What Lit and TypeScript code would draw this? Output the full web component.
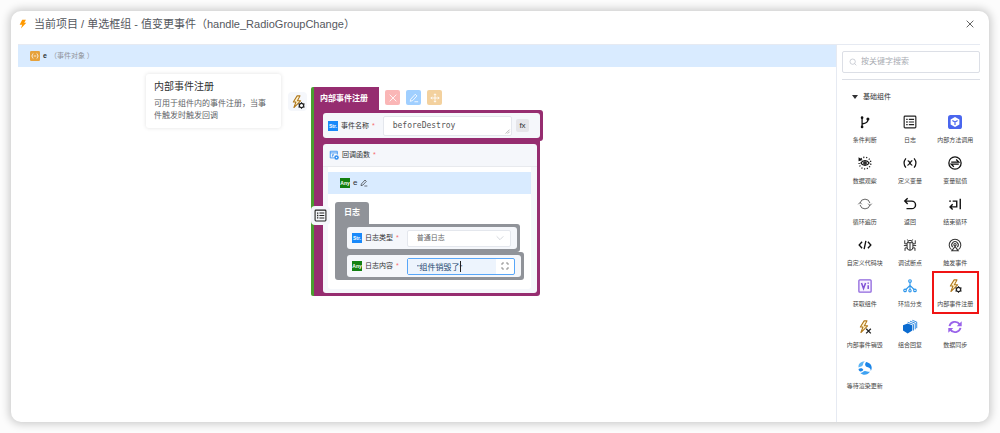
import { LitElement, html, css, svg, nothing } from "lit";
import { customElement, property } from "lit/decorators.js";
import { classMap } from "lit/directives/class-map.js";

const bolt = svg`<path d="M10.5 1.5 4 12h4.5L5 21.5 16.5 10H11l4.5-8.5z" fill="#fff3d0" stroke="#b0781c" stroke-width="1.8" stroke-linejoin="round"/>`;

const icons: Record<string, unknown> = {
  bolt: svg`<path d="M10 2h9l-4 7h5L7 23l3-9H4z" fill="#f90"/>`,
  close: svg`<path d="m4 4 16 16M20 4 4 20" stroke="currentColor" stroke-width="2" fill="none"/>`,
  search: svg`<g fill="none" stroke="currentColor" stroke-width="2"><circle cx="11" cy="11" r="8"/><path d="m17 17 5 5"/></g>`,
  pen: svg`<g fill="none" stroke="currentColor" stroke-width="2" stroke-linejoin="round"><path d="m4 15 11-12 4 4L9 18l-6 2zM13 21h9"/></g>`,
  move: svg`<g fill="none" stroke="currentColor" stroke-width="2"><path d="M12 2v20M2 12h20M9 5l3-3 3 3M9 19l3 3 3-3M5 9l-3 3 3 3M19 9l3 3-3 3"/></g>`,
  chevron: svg`<path d="m2 7 10 10L22 7" fill="none" stroke="currentColor" stroke-width="2"/>`,
  grip: svg`<path d="M3 22 22 3M13 22l9-9" fill="none" stroke="currentColor" stroke-width="2.5"/>`,
  expand: svg`<path d="M3 9V3h6M15 3h6v6M21 15v6h-6M9 21H3v-6" fill="none" stroke="currentColor" stroke-width="2.4"/>`,
  object: svg`<rect width="24" height="24" rx="3" fill="#e6a23c"/><g fill="none" stroke="#fff" stroke-width="1.8"><path d="M8 6c-3 0-1 6-4 6 3 0 1 6 4 6M16 6c3 0 1 6 4 6-3 0-1 6-4 6M9 12h6"/></g>`,
  func: svg`<g fill="none" stroke="#2f8cf0" stroke-width="2"><path d="M12 19H3V3h17v8M3 7h17M7 16c3 0 1-6 4-6M7 12h4"/></g><circle cx="18" cy="18" r="5.5" fill="#2f8cf0"/><circle cx="18" cy="18" r="1.8" fill="#fff"/>`,
  branch: svg`<g fill="none" stroke="#111" stroke-width="2.2"><path d="M7 5v15M8 15c6-1 9-2 9-7"/></g><g fill="#111"><circle cx="7" cy="4.5" r="2.3"/><circle cx="7" cy="20.5" r="2.3"/><circle cx="17" cy="7" r="2.6"/></g>`,
  log: svg`<g fill="none" stroke="#222"><rect x="2" y="2" width="20" height="20" rx="1.5" stroke-width="2"/><path d="M10 7.5h9M10 12h9M10 16.5h9" stroke-width="2"/><path d="M5.500 7.500h2.500M5.500 12h2.500M5.500 16.500h2.500" stroke-width="2.4"/></g>`,
  method: svg`<rect width="24" height="24" rx="4.500" fill="#4a66ee"/><path d="m12 3.500 7.500 4.300v8.400L12 20.500l-7.500-4.300V7.800z" fill="#fff"/><path d="m7.500 9.500 4.500 2.700 4.500-2.700M12 12v5" fill="none" stroke="#4a66ee" stroke-width="2"/>`,
  watch: svg`<g fill="none" stroke="#111"><path d="M5 5a10 10 0 1 1-3 7" stroke-width="2.4" stroke-dasharray="1.8 3"/><path d="M5 12c3-5.500 11-5.500 14 0-3 5.500-11 5.500-14 0z" stroke-width="2.200"/><circle cx="12" cy="12" r="2" stroke-width="2.400"/></g><path d="M1 2v7l7-2z" fill="#111"/>`,
  variable: svg`<g fill="none" stroke="#111" stroke-width="2.100"><path d="M5 4C1 9 1 15 5 20M19 4c4 5 4 11 0 16M8 8.500c4-1.500 4 8.500 8 7M16 8c-3 0-5 8-8.500 8"/></g>`,
  assign: svg`<g fill="none" stroke="#111" stroke-width="2.200"><circle cx="12" cy="12" r="10.500"/><path d="M5.500 10.500h13L14 6M18.500 14h-13l4.500 4.500"/></g>`,
  loop: svg`<g fill="none" stroke="#666" stroke-width="1.700"><path d="M3.500 10.500a8.700 8.700 0 0 1 17 0M20.500 13.500a8.700 8.700 0 0 1-17 0M.5 12.500l3-3 3 3M17.500 11.500l3 3 3-3"/></g>`,
  back: svg`<path d="M8 2 3 7l5 5M3 7h12a6 6 0 0 1 0 13H6" fill="none" stroke="#111" stroke-width="2.400"/>`,
  endloop: svg`<g fill="none" stroke="#111" stroke-width="2.400"><path d="M2 7h3M8 7h7v10H4M8 12.500 3.500 17 8 21.500M21 3v18"/></g>`,
  code: svg`<path d="m7 6.500-5 5.500 5 5.500M17 6.500l5 5.500-5 5.500M13.500 5l-3 14" fill="none" stroke="#111" stroke-width="2.300"/>`,
  bug: svg`<g fill="none" stroke="#333" stroke-width="1.700"><path d="M7 8h10v8a5 5 0 0 1-10 0zM8 8a4 4 0 0 1 8 0M12 8v13M7 13H1.500M17 13h5.500M7 10H3V4M17 10h4V4M7.500 17H3.500v5M16.500 17h4v5M9 5 7.500 2.500M15 5l1.500-2.500"/></g>`,
  trigger: svg`<g fill="none" stroke="#333" stroke-width="1.800"><path d="M6 20a10 10 0 1 1 12 0"/><path d="M8 15.500a5.500 5.500 0 1 1 8 0"/><circle cx="12" cy="11.500" r="2"/><path d="M12 14.500 6.500 22h11z"/></g>`,
  vi: svg`<rect x="1.500" y="1.500" width="21" height="21" rx="1.500" fill="#f6f1ff" stroke="#8f66dd" stroke-width="2.200"/><path d="m6 7 3.500 9.500L13 7M17.500 10.500V17M17.500 6v2.200" fill="none" stroke="#8253d6" stroke-width="2.600"/>`,
  tree: svg`<g fill="none" stroke="#2b95ea" stroke-width="1.900"><circle cx="12" cy="3.500" r="2.300"/><circle cx="3.500" cy="19.500" r="2.200"/><circle cx="12" cy="20" r="2"/><circle cx="20.500" cy="19.500" r="2.200"/><path d="M12 6v12M12 11l-7 7M12 11l7 7"/></g>`,
  register: svg`${bolt}<circle cx="18" cy="18" r="3.700" fill="#fff" stroke="#222" stroke-width="2.200"/><path d="M18 12.300v2M18 21.700v2M12.800 15l1.800 1M21.400 20l1.800 1M12.800 21l1.800-1M21.400 16l1.800-1" stroke="#222" stroke-width="1.800"/>`,
  destroy: svg`${bolt}<path d="m14 15 8 8M22 15l-8 8" stroke="#222" stroke-width="2.200"/>`,
  group: svg`<path d="m8 6 8 3v9l-8 5-8-5V9z" fill="#0b6bd0"/><path d="m8 4 10 3.500V18M12 2l9 3.500V16M16 .5l7.500 3V14" fill="none" stroke="#2b86e0" stroke-width="1.600"/>`,
  sync: svg`<g fill="none" stroke="#9a63ea" stroke-width="3.200"><path d="M2.500 10.500a9.700 9.700 0 0 1 17.500-3M21.500 13.500A9.700 9.700 0 0 1 4 16.500"/></g><path d="M23.500 2v8.500H15zM.5 22v-8.500H9z" fill="#9a63ea"/>`,
  render: svg`<path d="M1 11C0 5 5 .5 12 1 7.500 3 10 6.500 7 8.500c-2 1.200-4 1-6 2.500z" fill="#5bb5f5"/><path d="M14 1.500c8 1 12 9 8 15.500 0-4-2-6-5-6.500-3.500-.5-7-4.500-3-9z" fill="#1c86e8"/><path d="M20.500 18.500c-4 6-12 6.500-16.500 2 3.500 0 4-3 7.500-3.500 3-.3 6 2 9 1.500z" fill="#3fa2f2"/><path d="M1 13.500c3-2 7.500-1.500 8 1.500-1 2.500-4 3.500-6 2.500C1.500 16.500 1 15 1 13.500z" fill="#1c86e8"/>`,
};

@customElement("ui-icon")
class UiIcon extends LitElement {
  @property() name = "";
  static styles = css`
    :host { display: inline-flex; flex: none; width: 10px; height: 10px; }
    svg { display: block; width: 100%; height: 100%; overflow: visible; }
  `;
  render() {
    return html`<svg viewBox="0 0 24 24" aria-hidden="true">${icons[this.name] ?? nothing}</svg>`;
  }
}

const palette = [
  ["branch", "条件判断"], ["log", "日志"], ["method", "内部方法调用"],
  ["watch", "数据观察"], ["variable", "定义变量"], ["assign", "变量赋值"],
  ["loop", "循环遍历"], ["back", "返回"], ["endloop", "结束循环"],
  ["code", "自定义代码块"], ["bug", "调试断点"], ["trigger", "触发事件"],
  ["vi", "获取组件"], ["tree", "环境分支"], ["register", "内部事件注册"],
  ["destroy", "内部事件销毁"], ["group", "组合回复"], ["sync", "数据同步"],
  ["render", "等待渲染更新"],
];

@customElement("app-root")
class AppRoot extends LitElement {
  static styles = css`
    :host {
      display: flex; box-sizing: border-box; min-height: 100vh; padding: 11px;
      background: #fcfcfc; color: #303133;
      font: 7px/12px "Liberation Sans", "Noto Sans CJK SC", sans-serif;
    }
    * { box-sizing: border-box; }
    button, input, select, textarea { font: inherit; color: inherit; margin: 0; padding: 0; border: 0; background: none; outline: none; }
    .dialog {
      flex: 1; display: flex; flex-direction: column; background: #fff;
      border-radius: 10px; box-shadow: 0 0 8px 2px rgba(0, 0, 0, 0.2);
    }
    header { display: flex; align-items: center; gap: 6px; height: 33px; padding: 0 14px 8px 7px; }
    h1 { flex: 1; margin: 0; font-size: 11px; line-height: 16px; font-weight: 400; color: #55585e; }
    .close { display: flex; color: #444; }
    .body { flex: 1; display: flex; margin: 0 9px 0 7px; border-top: 1px solid #e6eaf2; }
    .canvas { flex: 1; display: flex; flex-direction: column; }
    .scope { display: flex; align-items: center; gap: 3px; height: 22px; background: #d9ebff; }
    .scope.top { padding: 0 12px; }
    .muted { color: #909399; }
    .stage { display: flex; align-items: flex-start; padding: 7px 0 0 128px; }
    .tip {
      width: 135px; padding: 6px 9px 6px 8px; border-radius: 3px;
      box-shadow: 0 0 4px rgba(0, 0, 0, 0.12);
    }
    .tip h2 { margin: 0 0 4px; font-size: 10px; line-height: 14px; font-weight: 400; }
    .tip p { margin: 0; font-size: 8px; color: #606266; }
    .tile {
      display: flex; align-items: center; justify-content: center; width: 19px; height: 19px;
      border-radius: 4px; background: #f5f7fb;
    }
    .tile.event { margin: 18px 4px 0 7px; }
    .tile.event ui-icon { width: 14px; height: 14px; }
    .block { position: relative; margin-top: 13px; border-left: 3px solid #4a9e2f; border-radius: 2px; }
    .block-head { display: flex; gap: 6px; }
    .tab { padding: 0 11px 0 6px; background: #962d70; color: #fff; font-size: 8px; line-height: 23px; font-weight: 700; }
    .tools { display: flex; gap: 6px; padding-top: 3px; }
    .tool { display: flex; align-items: center; justify-content: center; width: 15px; height: 15px; border-radius: 2px; color: #fff; }
    .red { background: #fab6b6; }
    .blue { background: #a0cfff; }
    .gold { background: #f3d19e; }
    .shell { width: 229px; padding: 3px 3px 3px 9px; background: #962d70; border-radius: 0 3px 3px 0; }
    .shell.inner { width: 226px; border-radius: 0 0 3px 0; }
    .field { display: flex; align-items: center; gap: 4px; height: 25px; padding: 0 11px 0 5px; border-radius: 3px; background: #f5f7fb; }
    .field label, .callback-name { display: flex; align-items: center; gap: 3px; white-space: nowrap; }
    .req { color: #f56c6c; }
    .type {
      display: flex; align-items: center; justify-content: center; width: 10px; height: 10px;
      background: #1989fa; color: #fff; font-size: 5px; line-height: 10px; font-weight: 700;
    }
    .type.any { background: #128012; }
    .box { position: relative; display: flex; flex: 1; border: 1px solid #e4e7ed; border-radius: 2px; background: #fff; }
    .box textarea {
      flex: 1; width: 0; height: 18px; padding: 3px 9px; resize: none; overflow: hidden;
      font: 8px/12px "DejaVu Sans Mono", monospace; color: #555; white-space: nowrap;
    }
    .box.name { margin-left: 4px; }
    .grip { position: absolute; right: 1px; bottom: 1px; width: 5px; height: 5px; color: #777; }
    .fx { width: 13px; height: 13px; border-radius: 2px; background: #e6e6ea; font-size: 8px; line-height: 12px; }
    .callback { border-radius: 3px; background: #f5f7fb; padding-bottom: 4px; }
    .callback-name { height: 23px; padding: 0 6px; border-bottom: 1px solid #e8eaee; }
    .content { margin: 0 6px 0 5px; padding: 5px 0 9px; background: #fff; border-radius: 0 0 3px 3px; }
    .content .scope { padding-left: 12px; font-size: 8px; }
    .content .scope ui-icon { width: 8px; height: 8px; }
    .nested { margin: 8px 0 0 7px; display: flex; flex-direction: column; align-items: flex-start; }
    .nested .tab { background: #909399; line-height: 22px; padding: 0 9px; border-radius: 3px 3px 0 0; }
    .log-row { width: 185px; padding: 3px 3px 3px 12px; background: #909399; border-radius: 0 3px 3px 0; }
    .log-row.wide { width: 189px; border-radius: 0 3px 3px 3px; }
    .log-row .field { height: 22px; padding: 0 6px 0 5px; }
    .log-row .box { height: 17px; margin-left: 4px; align-items: center; }
    .log-row select, .log-row input { flex: 1; width: 0; height: 15px; padding: 0 9px; appearance: none; color: #666; }
    .log-row .box.active { border-color: #58a6f8; }
    .log-row input { font-size: 8px; background: #edf4fd; color: #24466e; }
    .chevron { position: absolute; right: 6px; width: 8px; height: 8px; color: #c0c4cc; }
    .expand { display: flex; padding: 0 5px; color: #777; }
    .expand ui-icon { width: 8px; height: 8px; }
    .caret { position: absolute; left: 52px; top: 2px; width: 1px; height: 11px; background: #222; }
    .marker { position: absolute; left: -3px; top: 119px; }
    .marker ui-icon { width: 13px; height: 13px; }
    aside { flex: none; width: 144px; border-left: 1px solid #e6eaf2; padding: 6px 0 0 5px; }
    .search { display: flex; align-items: center; gap: 4px; height: 22px; padding: 0 6px; border: 1px solid #dcdfe6; border-radius: 2px; color: #b5bac4; }
    .search ui-icon { width: 8px; height: 8px; }
    .search input { flex: 1; width: 0; font-size: 8px; }
    .search input::placeholder { color: #a8abb2; }
    .group-title { display: flex; align-items: center; gap: 5px; width: 100%; height: 24px; margin-top: 6px; padding: 11px 10px 0; border-top: 1px solid #dcdfe6; text-align: left; }
    .arrow { border: 3px solid transparent; border-top: 4px solid #303133; border-bottom: 0; }
    .grid { display: grid; grid-template-columns: repeat(3, 1fr); margin: 5px 2px 0 0; }
    .item { display: flex; flex-direction: column; align-items: center; gap: 6px; height: 41px; padding-top: 7px; font-size: 6px; line-height: 10px; white-space: nowrap; color: #444; }
    .item ui-icon { width: 14px; height: 14px; }
    .item.marked { outline: 2px solid #f01414; outline-offset: -1px; }
  `;

  render() {
    return html`
      <div class="dialog">
        <header>
          <ui-icon name="bolt"></ui-icon>
          <h1>当前项目 / 单选框组 - 值变更事件（handle_RadioGroupChange）</h1>
          <button class="close" aria-label="关闭"><ui-icon name="close"></ui-icon></button>
        </header>
        <div class="body">
          <main class="canvas">
            <div class="scope top">
              <ui-icon name="object"></ui-icon><b>e</b><span class="muted">（事件对象 ）</span>
            </div>
            <div class="stage">
              <section class="tip">
                <h2>内部事件注册</h2>
                <p>可用于组件内的事件注册，当事件触发时触发回调</p>
              </section>
              <div class="tile event"><ui-icon name="register"></ui-icon></div>
              ${this.renderBlock()}
            </div>
          </main>
          ${this.renderPalette()}
        </div>
      </div>
    `;
  }

  private renderBlock() {
    return html`
      <section class="block">
        <div class="block-head">
          <div class="tab">内部事件注册</div>
          <div class="tools">
            <button class="tool red" aria-label="删除"><ui-icon name="close"></ui-icon></button>
            <button class="tool blue" aria-label="编辑"><ui-icon name="pen"></ui-icon></button>
            <button class="tool gold" aria-label="移动"><ui-icon name="move"></ui-icon></button>
          </div>
        </div>
        <div class="shell">
          <div class="field">
            <label for="event-name"><span class="type">Str.</span>事件名称 <span class="req">*</span></label>
            <div class="box name">
              <textarea id="event-name" rows="1" spellcheck="false" .value=${"beforeDestroy"}></textarea>
              <ui-icon class="grip" name="grip"></ui-icon>
            </div>
            <button class="fx">fx</button>
          </div>
        </div>
        <div class="shell inner">
          <div class="callback">
            <div class="callback-name"><ui-icon name="func"></ui-icon>回调函数 <span class="req">*</span></div>
            <div class="content">
              <div class="scope"><span class="type any">Any</span>e<ui-icon name="pen"></ui-icon></div>
              <div class="nested">
                <div class="tab">日志</div>
                <div class="log-row">
                  <div class="field">
                    <label for="log-type"><span class="type">Str.</span>日志类型 <span class="req">*</span></label>
                    <div class="box">
                      <select id="log-type"><option>普通日志</option></select>
                      <ui-icon class="chevron" name="chevron"></ui-icon>
                    </div>
                  </div>
                </div>
                <div class="log-row wide">
                  <div class="field">
                    <label for="log-text"><span class="type any">Any</span>日志内容 <span class="req">*</span></label>
                    <div class="box active">
                      <input id="log-text" .value=${'"组件销毁了"'} />
                      <span class="caret"></span>
                      <button class="expand" aria-label="展开"><ui-icon name="expand"></ui-icon></button>
                    </div>
                  </div>
                </div>
              </div>
            </div>
          </div>
        </div>
        <div class="tile marker"><ui-icon name="log"></ui-icon></div>
      </section>
    `;
  }

  private renderPalette() {
    return html`
      <aside>
        <label class="search">
          <ui-icon name="search"></ui-icon>
          <input type="text" placeholder="按关键字搜索" aria-label="按关键字搜索" />
        </label>
        <button class="group-title"><span class="arrow"></span>基础组件</button>
        <div class="grid">
          ${palette.map(([icon, label]) => html`
            <button class=${classMap({ item: true, marked: icon === "register" })}>
              <ui-icon name=${icon}></ui-icon><span>${label}</span>
            </button>
          `)}
        </div>
      </aside>
    `;
  }
}
